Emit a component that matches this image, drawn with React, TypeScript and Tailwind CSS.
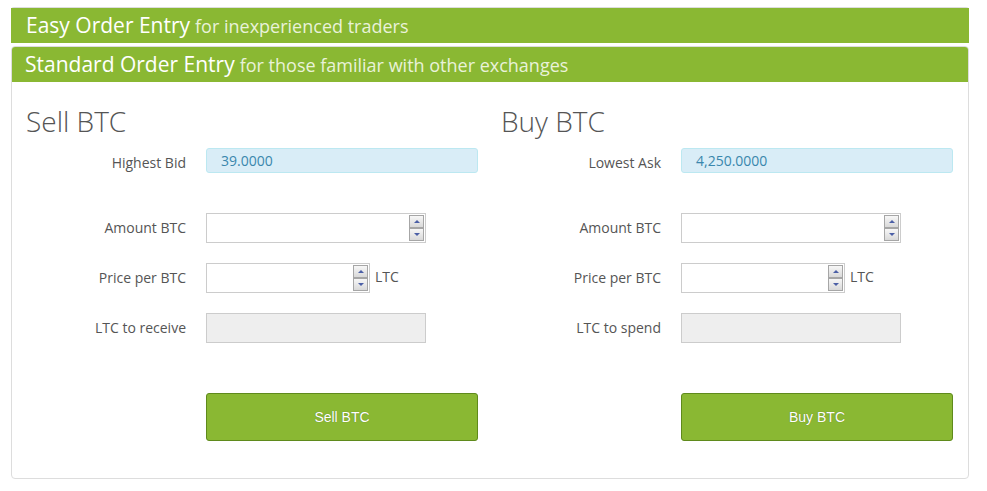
import React from "react";

const Spinner = () => (
  <div className="flex flex-col mr-px my-px">
    <div className="w-[15px] h-[13px] border border-[#a6a6a6] bg-gradient-to-b from-[#f7f7f7] to-[#d9d9d9] flex items-center justify-center">
      <div className="w-0 h-0 border-l-[3px] border-r-[3px] border-b-[3px] border-l-transparent border-r-transparent border-b-[#4b5fa6]" />
    </div>
    <div className="w-[15px] h-[13px] border border-[#a6a6a6] bg-gradient-to-b from-[#f7f7f7] to-[#d9d9d9] flex items-center justify-center">
      <div className="w-0 h-0 border-l-[3px] border-r-[3px] border-t-[3px] border-l-transparent border-r-transparent border-t-[#4b5fa6]" />
    </div>
  </div>
);

const NumberBox = ({ width }: { width: string }) => (
  <div className={`${width} h-[30px] border border-[#ccc] bg-white flex items-center`}>
    <input type="text" className="flex-1 min-w-0 h-full px-2 outline-none bg-transparent text-sm" />
    <Spinner />
  </div>
);

type SideProps = {
  title: string;
  quoteLabel: string;
  quote: string;
  totalLabel: string;
  action: string;
};

const Side = ({ title, quoteLabel, quote, totalLabel, action }: SideProps) => (
  <div className="flex flex-col">
    <h2 className="text-[28px] leading-[33px] font-light text-[#555] mt-[23px]">{title}</h2>

    <div className="flex items-center mt-[10px] h-[25px]">
      <label className="w-[160px] text-right text-sm text-[#555] pt-[5px]">{quoteLabel}</label>
      <div className="ml-[20px] w-[272px] h-[25px] rounded-[3px] border border-[#bce8f1] bg-[#d9edf7] text-[#3a87ad] text-[14px] pl-[14px] flex items-center">
        {quote}
      </div>
    </div>

    <div className="flex items-center mt-[40px] h-[30px]">
      <label className="w-[160px] text-right text-sm text-[#555]">Amount BTC</label>
      <div className="ml-[20px]">
        <NumberBox width="w-[220px]" />
      </div>
    </div>

    <div className="flex items-center mt-[20px] h-[30px]">
      <label className="w-[160px] text-right text-sm text-[#555]">Price per BTC</label>
      <div className="ml-[20px] flex items-center">
        <NumberBox width="w-[164px]" />
        <span className="ml-[5px] text-sm text-[#555] -mt-[3px]">LTC</span>
      </div>
    </div>

    <div className="flex items-center mt-[20px] h-[30px]">
      <label className="w-[160px] text-right text-sm text-[#555]">{totalLabel}</label>
      <div className="ml-[20px] w-[220px] h-[30px] border border-[#ccc] bg-[#eee]" />
    </div>

    <div className="flex mt-[50px] mb-[37px]">
      <div className="w-[160px]" />
      <button className="ml-[20px] w-[272px] h-[48px] rounded-[3px] bg-[#8ab833] border border-[#5f8a1c] text-white text-sm font-['Liberation_Sans',Arial,sans-serif] [text-shadow:0_0_1px_rgba(0,0,0,0.35)]">
        {action}
      </button>
    </div>
  </div>
);

export default function App() {
  return (
    <div className="w-[987px] h-[491px] bg-white font-['Open_Sans',sans-serif] pt-[7px] pl-[11px]">
      <div className="w-[958px] border-t border-[#ddd] rounded-t-[3px]">
        <div className="h-[35px] bg-[#8ab833] flex items-center px-[15px] text-white">
          <span className="text-[21px]">Easy Order Entry</span>
          <span className="text-[18px] text-[#e9f2d9] ml-[5px] mt-[2px]">for inexperienced traders</span>
        </div>
      </div>

      <div className="w-[958px] mt-[3px] border border-[#ddd] rounded-[4px] overflow-hidden">
        <div className="h-[35px] bg-[#8ab833] flex items-center px-[14px] text-white -mx-px">
          <span className="text-[21px]">Standard Order Entry</span>
          <span className="text-[18px] text-[#e9f2d9] ml-[5px] mt-[2px]">for those familiar with other exchanges</span>
        </div>
        <div className="grid grid-cols-[475px_477px] pl-[14px]">
          <Side
            title="Sell BTC"
            quoteLabel="Highest Bid"
            quote="39.0000"
            totalLabel="LTC to receive"
            action="Sell BTC"
          />
          <Side
            title="Buy BTC"
            quoteLabel="Lowest Ask"
            quote="4,250.0000"
            totalLabel="LTC to spend"
            action="Buy BTC"
          />
        </div>
      </div>
    </div>
  );
}
